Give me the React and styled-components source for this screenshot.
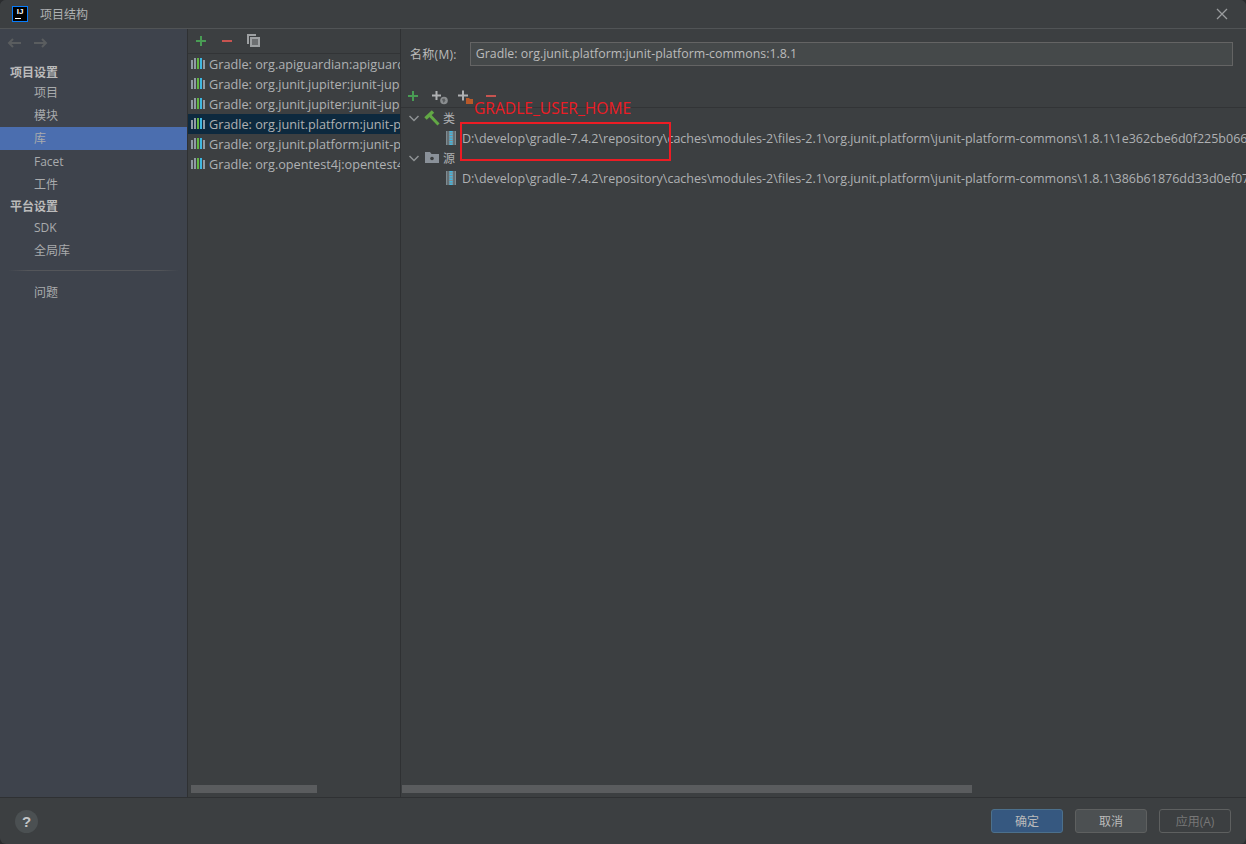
import React from "react";
import styled, { createGlobalStyle } from "styled-components";

const GlobalStyle = createGlobalStyle`
  html, body { margin: 0; padding: 0; background: #2b2d2f; }
  body { font-family: "Open Sans", "Noto Sans CJK SC", sans-serif; font-size: 13px; color: #bbbbbb; }
`;

const Dialog = styled.div`
  position: relative;
  width: 1246px;
  height: 844px;
  display: flex;
  flex-direction: column;
  background: #3c3f41;
  border-radius: 6px;
  overflow: hidden;
`;
const TitleBar = styled.div`
  height: 28px;
  display: flex;
  align-items: center;
  padding: 0 17px 0 12px;
  gap: 12px;
  background: #3c3f41;
  border-bottom: 1px solid #515456;
  font-size: 12px;
`;
const Logo = styled.div`
  width: 14px;
  height: 14px;
  background: #000;
  border: 1px solid #087cfa;
  color: #fff;
  font: bold 8px/10px "Liberation Sans", sans-serif;
  text-align: center;
  position: relative;
  &::after {
    content: "";
    position: absolute;
    left: 2px;
    bottom: 2px;
    width: 6px;
    height: 1px;
    background: #fff;
  }
`;
const TitleText = styled.span`
  flex: 1;
  color: #afb1b3;
`;
const Main = styled.div`
  flex: 1;
  display: flex;
  min-height: 0;
`;
const Sidebar = styled.nav`
  width: 187px;
  flex: none;
  background: #3e434c;
  border-right: 1px solid #2f3133;
  display: flex;
  flex-direction: column;
`;
const NavArrows = styled.div`
  height: 28px;
  display: flex;
  align-items: center;
  gap: 13px;
  padding: 0 7px;
`;
const SectionTitle = styled.div`
  height: 21px;
  line-height: 21px;
  padding-left: 10px;
  font-weight: 700;
  font-size: 12px;
  color: #bbbbbb;
  margin-top: ${(p) => p.$top || 0}px;
  margin-bottom: ${(p) => p.$bottom || 0}px;
`;
const NavItem = styled.div`
  height: 23px;
  line-height: 23px;
  padding-left: 34px;
  font-size: 12px;
  color: #a9abad;
  background: ${(p) => (p.$active ? "#4b6eaf" : "transparent")};
`;
const NavDivider = styled.div`
  height: 1px;
  margin: 8px 8px 10px;
  background: linear-gradient(90deg, #3e434c, #54565a 12%, #54565a 88%, #3e434c);
`;
const ListPanel = styled.div`
  width: 212px;
  flex: none;
  display: flex;
  flex-direction: column;
  border-right: 1px solid #2f3133;
`;
const ListTools = styled.div`
  height: 24px;
  display: flex;
  align-items: center;
  gap: 12px;
  padding-left: 6px;
  border-bottom: 1px solid #323436;
`;
const ToolIcon = styled.svg`
  width: 14px;
  height: 14px;
  flex: none;
  display: block;
  overflow: visible;
`;
const LibList = styled.ul`
  flex: 1;
  margin: 0;
  padding: 0;
  list-style: none;
  overflow: hidden;
`;
const LibRow = styled.li`
  height: 20px;
  display: flex;
  align-items: center;
  gap: 4px;
  padding-left: 3px;
  white-space: nowrap;
  overflow: hidden;
  color: #afb1b3;
  font-size: 12.7px;
  background: ${(p) => (p.$selected ? "#0d293e" : "transparent")};
`;
const RowIcon = styled.svg`
  width: ${(p) => p.$size || 14}px;
  height: ${(p) => p.$size || 14}px;
  flex: none;
`;
const Track = styled.div`
  height: 12px;
  flex: none;
  display: flex;
  padding-left: ${(p) => p.$left}px;
`;
const Thumb = styled.div`
  height: 8px;
  width: ${(p) => p.$width}px;
  background: #5a5c5e;
`;
const Detail = styled.div`
  flex: 1;
  min-width: 0;
  display: flex;
  flex-direction: column;
`;
const NameRow = styled.div`
  height: 24px;
  margin-top: 13px;
  display: flex;
  align-items: center;
  gap: 13px;
  padding: 0 13px 0 9px;
  font-size: 12px;
  letter-spacing: 0.3px;
`;
const NameInput = styled.div`
  flex: 1;
  height: 22px;
  line-height: 21px;
  padding-left: 5px;
  background: #45494a;
  border: 1px solid #646464;
  color: #bbbbbb;
  font-size: 12.35px;
  letter-spacing: 0;
`;
const TreeTools = styled.div`
  height: 22px;
  margin-top: 18px;
  padding-top: 1px;
  display: flex;
  align-items: center;
  gap: 12px;
  padding-left: 5px;
  border-bottom: 1px solid #323436;
`;
const Tree = styled.div`
  flex: 1;
  overflow: hidden;
  white-space: nowrap;
`;
const TreeRow = styled.div`
  height: 20px;
  display: flex;
  align-items: center;
  gap: ${(p) => p.$gap || 4}px;
  padding-left: ${(p) => p.$indent}px;
  color: #afb1b3;
  font-size: 12px;
`;
const PathText = styled.span`
  font-size: 12.5px;
  color: #afb1b3;
`;
const Footer = styled.footer`
  height: 47px;
  flex: none;
  display: flex;
  align-items: center;
  justify-content: space-between;
  padding: 0 15px;
  border-top: 1px solid #2f3133;
  box-sizing: border-box;
`;
const Help = styled.div`
  width: 23px;
  height: 23px;
  border-radius: 50%;
  background: #4b5052;
  color: #c4c6c8;
  font: bold 15px/23px "Liberation Sans", sans-serif;
  text-align: center;
`;
const Buttons = styled.div`
  display: flex;
  gap: 12px;
`;
const Button = styled.button`
  width: 72px;
  height: 24px;
  padding: 0;
  border-radius: 3px;
  font: 12px "Open Sans", "Noto Sans CJK SC", sans-serif;
  border: 1px solid ${(p) => (p.$primary ? "#4c708c" : "#5e6060")};
  background: ${(p) => (p.$primary ? "#365880" : p.$disabled ? "transparent" : "#4c5052")};
  color: ${(p) => (p.$disabled ? "#777777" : "#bbbbbb")};
`;
const RedBox = styled.div`
  position: absolute;
  left: 460px;
  top: 122px;
  width: 207px;
  height: 35px;
  border: 2px solid #ed1c24;
`;
const RedLabel = styled.span`
  position: absolute;
  left: 474px;
  top: 98px;
  color: #ed1c24;
  font-size: 15.6px;
  line-height: 20px;
`;

const Plus = () => (
  <ToolIcon viewBox="0 0 14 14">
    <path d="M2 7h10M7 2v10" stroke="#499c54" strokeWidth="2" />
  </ToolIcon>
);
const Minus = () => (
  <ToolIcon viewBox="0 0 14 14">
    <path d="M2 7h10" stroke="#c75450" strokeWidth="2" />
  </ToolIcon>
);
const Copy = () => (
  <ToolIcon viewBox="0 0 14 14">
    <path d="M1 0h9v2H3v8H1z" fill="#9da0a2" />
    <path d="M4 3h10v10H4z" fill="#9da0a2" />
    <path d="M6 6h6M6 8h6M6 10h6" stroke="#3c3f41" />
  </ToolIcon>
);
const PlusGlobe = () => (
  <ToolIcon viewBox="0 0 14 14">
    <path d="M0 6.500h9M4.500 2v9" stroke="#afb1b3" strokeWidth="2" />
    <circle cx="12" cy="11.500" r="3.800" fill="#8a8d8f" />
    <path d="M10 10l2.500-.5 1 2-2 2.500z" fill="#5c5f61" />
  </ToolIcon>
);
const PlusFolder = () => (
  <ToolIcon viewBox="0 0 14 14">
    <path d="M0 6.500h10M5 1.500v10" stroke="#afb1b3" strokeWidth="2" />
    <path d="M8 9h3l1 1h3v5H8z" fill="#b8592a" />
  </ToolIcon>
);
const Bars = () => (
  <RowIcon viewBox="0 0 14 14">
    <rect x="0" y="3" width="2" height="9" fill="#8f9ba4" />
    <rect x="3" y="1" width="2" height="11" fill="#8f9ba4" />
    <rect x="6" y="1" width="2" height="11" fill="#62b543" />
    <rect x="9" y="1" width="2" height="11" fill="#40b6e0" />
    <rect x="12" y="3" width="2" height="9" fill="#8f9ba4" />
  </RowIcon>
);
const Chevron = () => (
  <RowIcon viewBox="0 0 14 14">
    <path d="M2.500 5l4.500 4.500L11.500 5" fill="none" stroke="#8f9294" strokeWidth="1.500" />
  </RowIcon>
);
const Hammer = () => (
  <RowIcon $size={16} viewBox="0 0 16 16">
    <path d="M1.500 8.500L9 1.500" stroke="#62a845" strokeWidth="3.500" />
    <path d="M5.500 5l9 9.500" stroke="#62a845" strokeWidth="3" />
  </RowIcon>
);
const SourceFolder = () => (
  <RowIcon $size={16} viewBox="0 0 16 16">
    <path d="M1 2h5l1.500 2H15v9H1z" fill="#8a9199" />
    <circle cx="8" cy="8.500" r="1.800" fill="#3c3f41" />
  </RowIcon>
);
const Jar = () => (
  <RowIcon viewBox="0 0 14 14">
    <rect x="1" y="0" width="10" height="14" fill="#7f8b91" />
    <rect x="2.500" y="0" width="1" height="14" fill="#4a5052" />
    <rect x="8.500" y="0" width="1" height="14" fill="#4a5052" />
    <path d="M6 0v14" stroke="#40b6e0" strokeWidth="3" strokeDasharray="1.500 1" />
  </RowIcon>
);
const ArrowLeft = () => (
  <ToolIcon viewBox="0 0 14 14">
    <path d="M14 7H2M6 3L2 7l4 4" fill="none" stroke="#5a5d5f" strokeWidth="2" />
  </ToolIcon>
);
const ArrowRight = () => (
  <ToolIcon viewBox="0 0 14 14">
    <path d="M0 7h12M8 3l4 4-4 4" fill="none" stroke="#5a5d5f" strokeWidth="2" />
  </ToolIcon>
);
const Close = () => (
  <ToolIcon viewBox="0 0 14 14">
    <path d="M2 2l10 10M12 2L2 12" stroke="#9a9c9e" strokeWidth="1.300" />
  </ToolIcon>
);

const libs = [
  "Gradle: org.apiguardian:apiguardian-api:1.1.2",
  "Gradle: org.junit.jupiter:junit-jupiter-api:5.8.1",
  "Gradle: org.junit.jupiter:junit-jupiter-engine:5.8.1",
  "Gradle: org.junit.platform:junit-platform-commons:1.8.1",
  "Gradle: org.junit.platform:junit-platform-engine:1.8.1",
  "Gradle: org.opentest4j:opentest4j:1.2.0",
];
const base = "D:\\develop\\gradle-7.4.2\\repository\\caches\\modules-2\\files-2.1\\org.junit.platform\\junit-platform-commons\\1.8.1\\";

export default function App() {
  return (
    <Dialog>
      <GlobalStyle />
      <TitleBar>
        <Logo>IJ</Logo>
        <TitleText>项目结构</TitleText>
        <Close />
      </TitleBar>
      <Main>
        <Sidebar>
          <NavArrows>
            <ArrowLeft />
            <ArrowRight />
          </NavArrows>
          <SectionTitle $top={5} $bottom={-2}>项目设置</SectionTitle>
          <NavItem>项目</NavItem>
          <NavItem>模块</NavItem>
          <NavItem $active>库</NavItem>
          <NavItem>Facet</NavItem>
          <NavItem>工件</NavItem>
          <SectionTitle $bottom={-1}>平台设置</SectionTitle>
          <NavItem>SDK</NavItem>
          <NavItem>全局库</NavItem>
          <NavDivider />
          <NavItem>问题</NavItem>
        </Sidebar>
        <ListPanel>
          <ListTools>
            <Plus />
            <Minus />
            <Copy />
          </ListTools>
          <LibList>
            {libs.map((lib, i) => (
              <LibRow key={lib} $selected={i === 3}>
                <Bars />
                {lib}
              </LibRow>
            ))}
          </LibList>
          <Track $left={3}>
            <Thumb $width={126} />
          </Track>
        </ListPanel>
        <Detail>
          <NameRow>
            名称(M):
            <NameInput>Gradle: org.junit.platform:junit-platform-commons:1.8.1</NameInput>
          </NameRow>
          <TreeTools>
            <Plus />
            <PlusGlobe />
            <PlusFolder />
            <Minus />
          </TreeTools>
          <Tree>
            <TreeRow $indent={6} $gap={3}>
              <Chevron />
              <Hammer />
              类
            </TreeRow>
            <TreeRow $indent={44} $gap={3}>
              <Jar />
              <PathText>{base}1e362cbe6d0f225b066</PathText>
            </TreeRow>
            <TreeRow $indent={6} $gap={3}>
              <Chevron />
              <SourceFolder />
              源
            </TreeRow>
            <TreeRow $indent={44} $gap={3}>
              <Jar />
              <PathText>{base}386b61876dd33d0ef07</PathText>
            </TreeRow>
          </Tree>
          <Track $left={1}>
            <Thumb $width={570} />
          </Track>
        </Detail>
      </Main>
      <Footer>
        <Help>?</Help>
        <Buttons>
          <Button $primary>确定</Button>
          <Button>取消</Button>
          <Button $disabled>应用(A)</Button>
        </Buttons>
      </Footer>
      <RedBox />
      <RedLabel>GRADLE_USER_HOME</RedLabel>
    </Dialog>
  );
}
